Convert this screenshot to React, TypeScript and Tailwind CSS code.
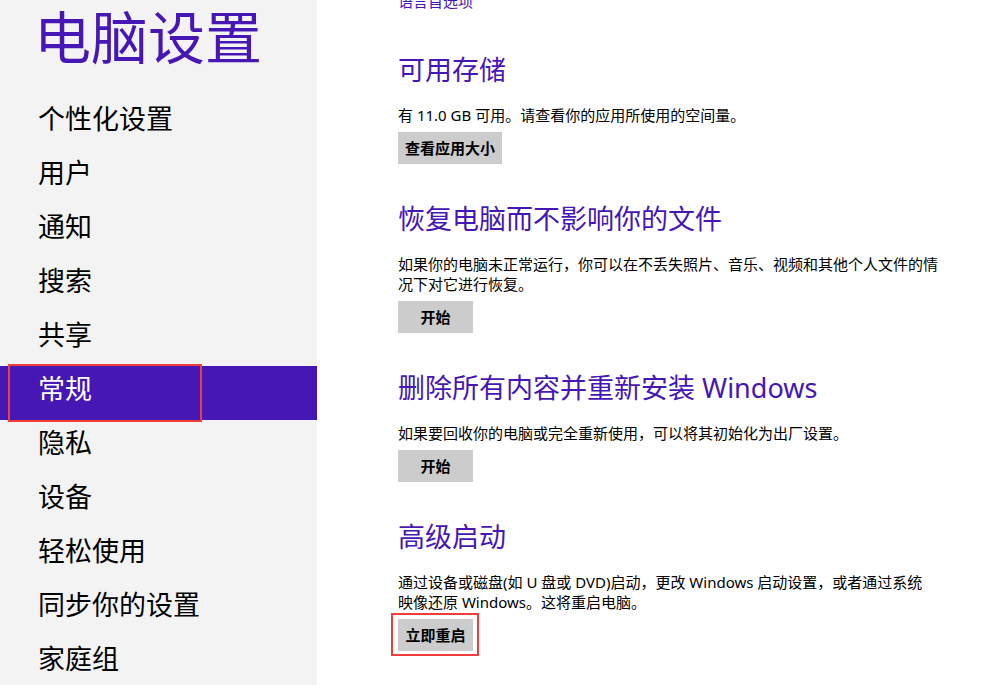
const navItems = [
  '个性化设置',
  '用户',
  '通知',
  '搜索',
  '共享',
  '常规',
  '隐私',
  '设备',
  '轻松使用',
  '同步你的设置',
  '家庭组',
]

const sections = [
  {
    title: '可用存储',
    body: '有 11.0 GB 可用。请查看你的应用所使用的空间量。',
    button: '查看应用大小',
  },
  {
    title: '恢复电脑而不影响你的文件',
    body: '如果你的电脑未正常运行，你可以在不丢失照片、音乐、视频和其他个人文件的情\n况下对它进行恢复。',
    button: '开始',
  },
  {
    title: '删除所有内容并重新安装 Windows',
    body: '如果要回收你的电脑或完全重新使用，可以将其初始化为出厂设置。',
    button: '开始',
  },
  {
    title: '高级启动',
    body: '通过设备或磁盘(如 U 盘或 DVD)启动，更改 Windows 启动设置，或者通过系统\n映像还原 Windows。这将重启电脑。',
    button: '立即重启',
    marked: true,
  },
]

export default function App() {
  return (
    <div
      className="flex h-[685px] w-[1004px] overflow-hidden bg-white text-black"
      style={{ fontFamily: '"Noto Sans", "Noto Sans CJK SC", sans-serif' }}
    >
      {/* Left nav */}
      <aside className="w-[317px] shrink-0 bg-[#f3f3f3]">
        <div className="h-[96px] pl-[34px] pt-[5px]">
          <h1 className="text-[57px] leading-[64px] text-[#4617b4]">电脑设置</h1>
        </div>
        <nav>
          {navItems.map((item) => {
            const active = item === '常规'
            return (
              <div
                key={item}
                className={
                  active
                    ? 'relative flex h-[54px] items-center bg-[#4617b4] pb-[8px] pl-[38px] text-[27px] text-white'
                    : 'relative flex h-[54px] items-center pb-[8px] pl-[38px] text-[27px] text-black'
                }
              >
                {item}
                {active && (
                  <div className="absolute left-[8px] top-[-2px] h-[58px] w-[194px] border-2 border-[#f23d3d]" />
                )}
              </div>
            )
          })}
        </nav>
      </aside>

      {/* Right content */}
      <main className="flex-1 pl-[81px]">
        <div className="mt-[-9px] text-[15px] leading-[20px] text-[#4617b4]">语言首选项</div>
        {sections.map((s, i) => (
          <section key={s.title} className={i === 0 ? 'pt-[41px]' : 'pt-[37px]'}>
            <h2 className="text-[27px] leading-[36px] text-[#4617b4]">{s.title}</h2>
            <p className="mt-[17px] w-[548px] whitespace-pre-line text-[15px] leading-[20px]">{s.body}</p>
            <div className="relative mt-[7px] inline-block">
              <button className="h-[32px] min-w-[75px] bg-[#cccccc] px-[7px] text-[15px] font-bold text-black">
                {s.button}
              </button>
              {s.marked && (
                <div className="absolute -left-[7px] -right-[6px] -top-[6px] -bottom-[5px] border-2 border-[#f23d3d]" />
              )}
            </div>
          </section>
        ))}
      </main>
    </div>
  )
}
